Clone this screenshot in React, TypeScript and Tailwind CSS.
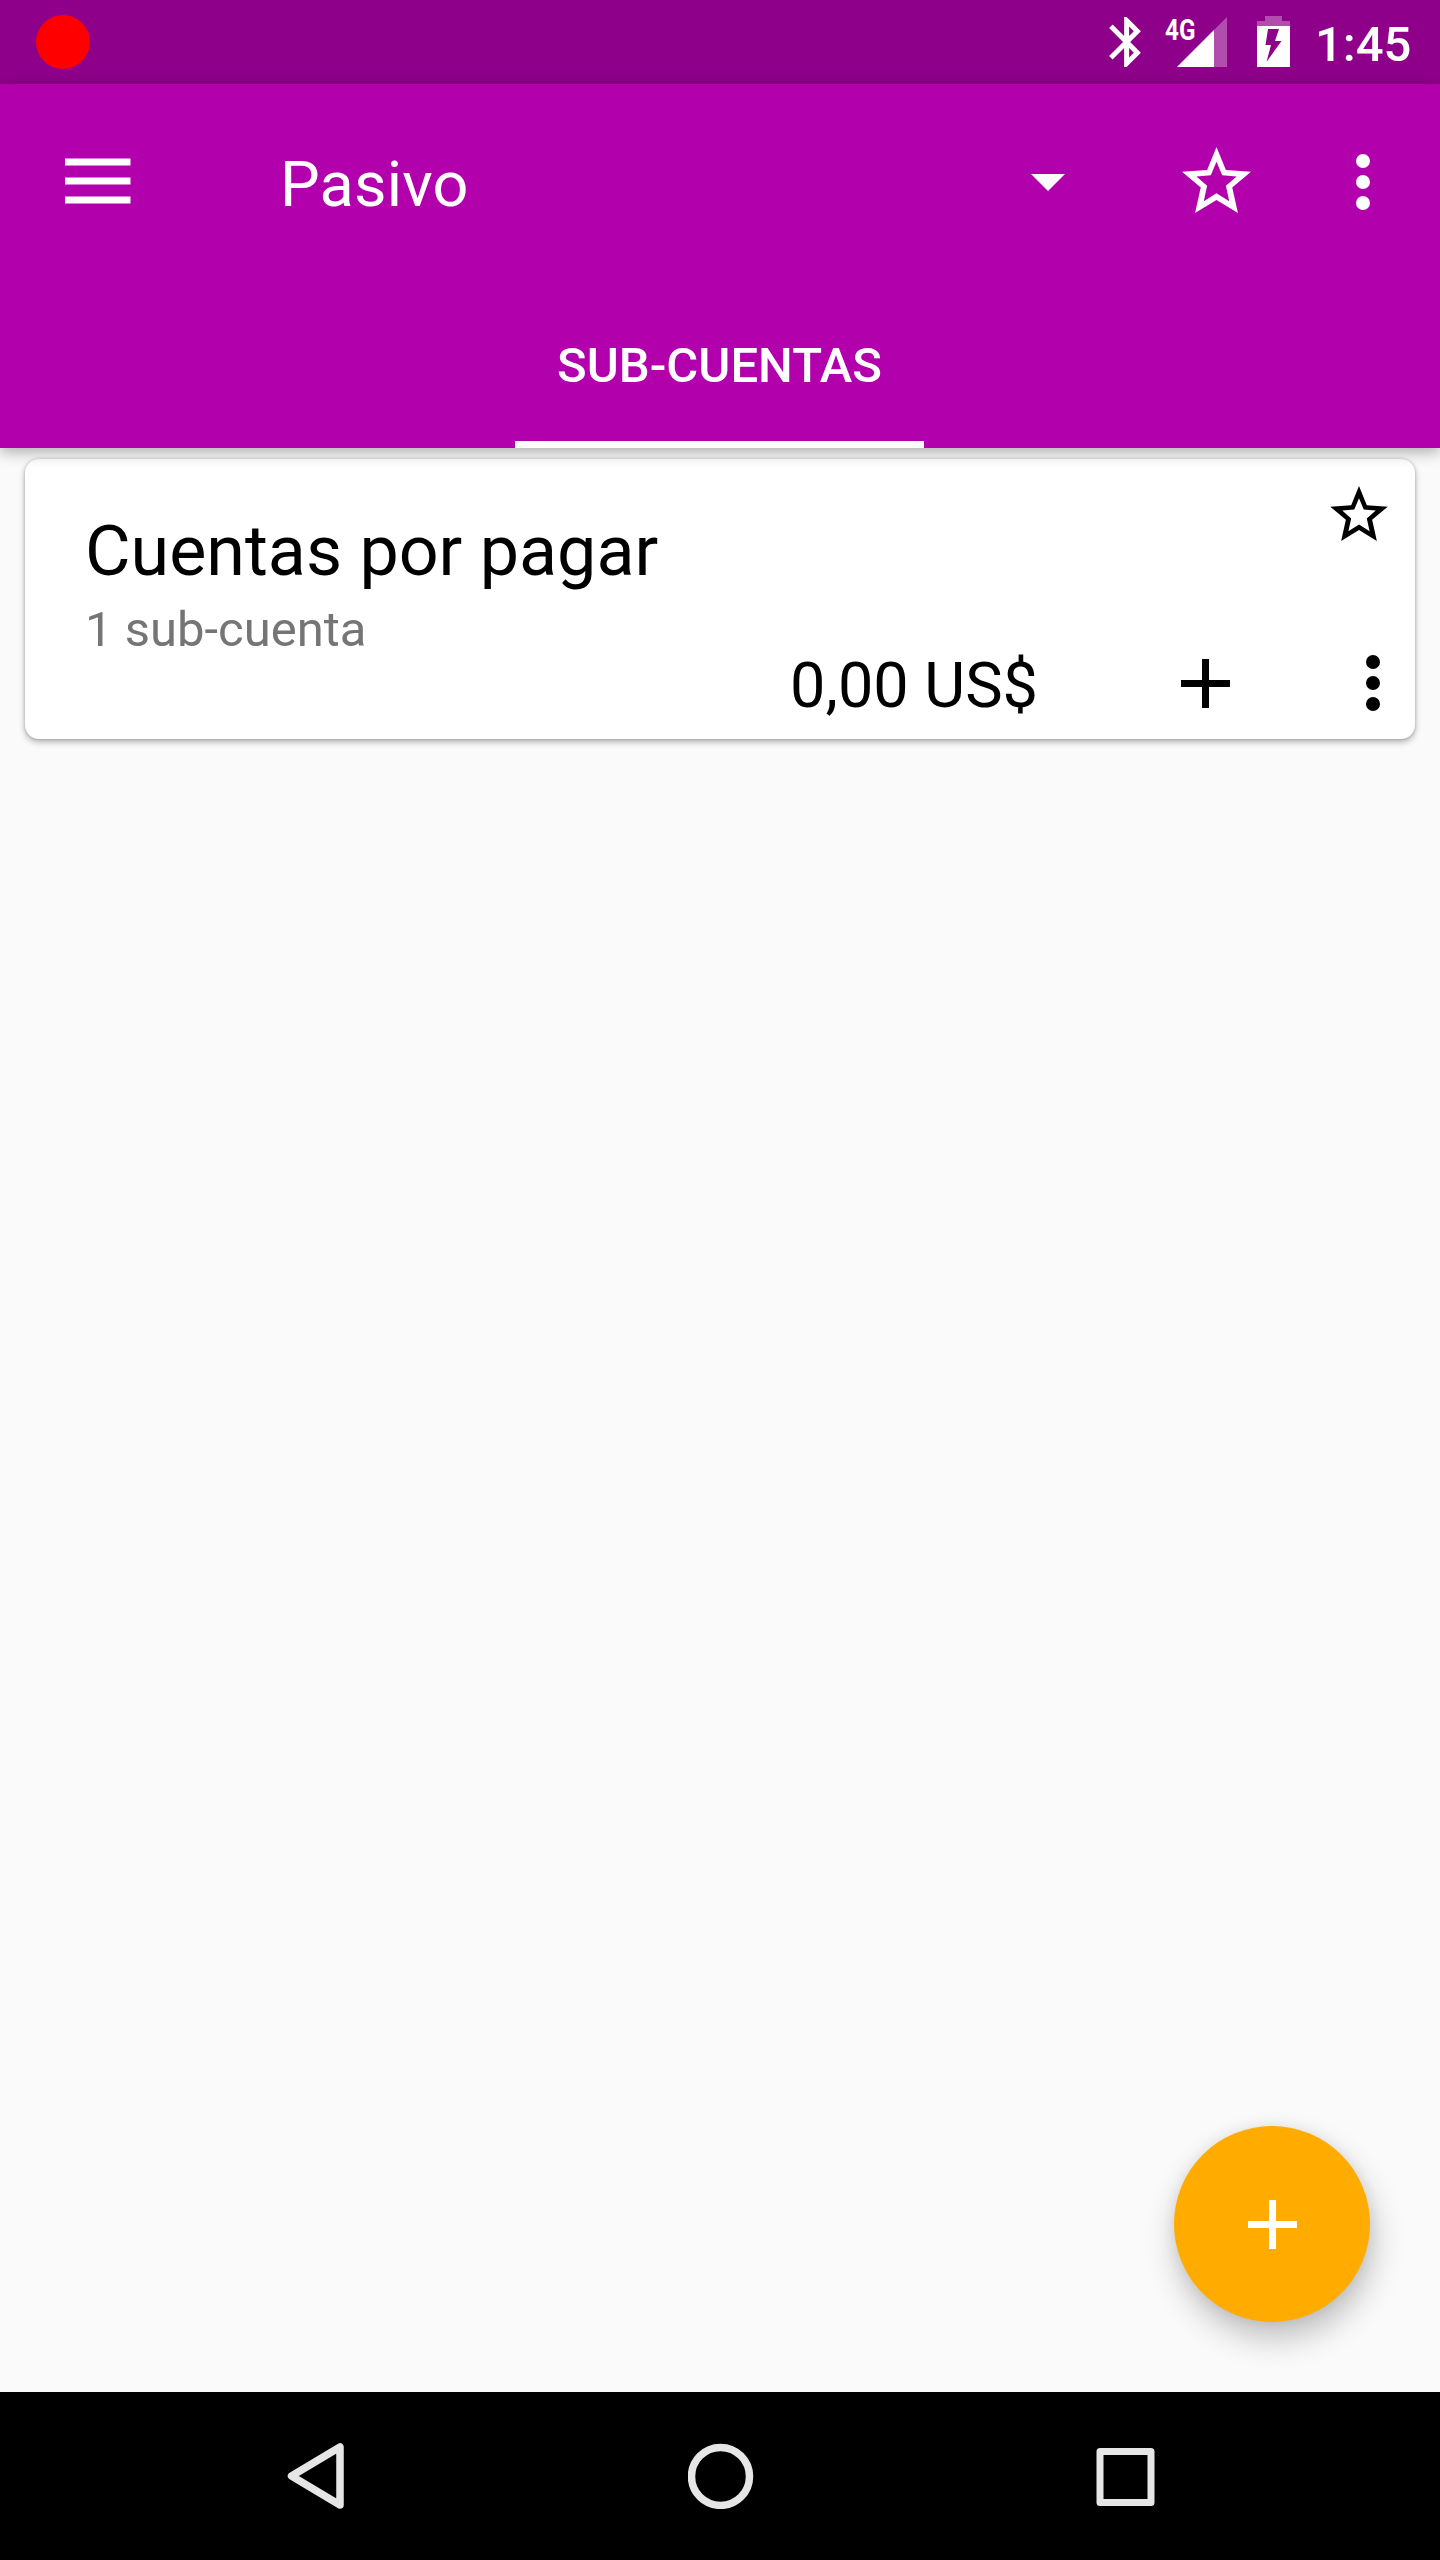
import React from "react";

function StarOutline({ className }: { className: string }) {
  return (
    <svg viewBox="0 0 206 197" className={className} fill="currentColor" fillRule="evenodd">
      <path d="M103 0L131 69L206 74L150 121L167 197L103 158L39 197L56 121L0 74L75 69Z M103 44L86 84L43 88L75 116L65 162L103 138L141 162L131 116L163 88L120 84Z" />
    </svg>
  );
}

function Dots({ className }: { className: string }) {
  return (
    <svg viewBox="0 0 14 56" className={className} fill="currentColor">
      <circle cx="7" cy="7" r="7" />
      <circle cx="7" cy="28" r="7" />
      <circle cx="7" cy="49" r="7" />
    </svg>
  );
}

function Plus({ className }: { className: string }) {
  return (
    <svg viewBox="0 0 49 49" className={className} fill="currentColor">
      <path d="M21 0h7v21h21v7H28v21h-7V28H0v-7h21z" />
    </svg>
  );
}

function StatusBar() {
  return (
    <div className="flex h-[84px] items-start bg-[#8f008a]">
      <div className="mt-[15px] ml-9 h-[54px] w-[54px] rounded-full bg-[#ff0000]" />
      <svg viewBox="5 2 12.71 20" className="mt-[17px] ml-[1019px] h-[50px] w-8" fill="white">
        <path d="M17.710 7.710L12 2h-1v7.590L6.410 5 5 6.410 10.590 12 5 17.590 6.410 19 11 14.410V22h1l5.710-5.710-4.300-4.290 4.300-4.290zM13 5.830l1.880 1.880L13 9.590V5.830zm1.880 10.460L13 18.170v-3.760l1.880 1.880z" />
      </svg>
      <div className="relative ml-[23px] h-[84px] w-[63px]">
        <span className="absolute top-[12px] left-px origin-left scale-x-[0.81] text-[30px] leading-[35px] font-bold">4G</span>
        <svg viewBox="0 0 50 50" className="absolute top-[17px] left-[13px] h-[50px] w-[50px]">
          <path d="M50 0V50H0z" fill="white" fillOpacity="0.3" />
          <path d="M37 13V50H0z" fill="white" />
        </svg>
      </div>
      <svg viewBox="0 0 33 51" className="mt-4 ml-[30px] h-[51px] w-[33px]">
        <path d="M8 0h17v5h8v5H0V5h8z" fill="white" fillOpacity="0.3" />
        <path fillRule="evenodd" fill="white" d="M0 10H33V51H0z M11 13L8.500 29H14L9.500 46L24.500 25H18L22 13z" />
      </svg>
      <span className="mt-[16px] ml-[25px] text-[49px] leading-[58px] font-medium">1:45</span>
    </div>
  );
}

function Header() {
  return (
    <header className="relative z-10 bg-[#b300ad] shadow-[0_4px_14px_rgba(0,0,0,0.32)]">
      <div className="flex h-[196px] items-center">
        <svg viewBox="0 0 66 46" className="mt-[-3px] ml-[65px] h-[46px] w-[66px]" fill="white">
          <path d="M0 .5h65.500v7H0zM0 19.500h65.500v7H0zM0 38.500h65.500v7H0z" />
        </svg>
        <h1 className="mt-[5px] ml-[149px] flex-1 text-[63px] leading-[74px] tracking-[0.2px]">Pasivo</h1>
        <svg viewBox="0 0 34 17" className="mr-[117px] h-[17px] w-[34px]" fill="white">
          <path d="M0 0h34L17 17z" />
        </svg>
        <StarOutline className="mt-[-4px] mr-[105px] h-[66px] w-[69px]" />
        <Dots className="mr-[70px] h-14 w-[14px]" />
      </div>
      <div className="flex h-[168px] justify-center pr-px">
        <div className="flex w-[409px] items-center justify-center border-b-[7px] border-white pt-[11px]">
          <span className="text-[49px] leading-[58px] font-medium">SUB-CUENTAS</span>
        </div>
      </div>
    </header>
  );
}

function AccountCard() {
  return (
    <section className="mx-[25px] mt-[11px] flex h-[280px] justify-between rounded-[14px] bg-white text-black shadow-[0_3px_6px_rgba(0,0,0,0.3),0_0_3px_rgba(0,0,0,0.18)]">
      <div className="pt-[51px] pl-[60px]">
        <h2 className="text-[70px] leading-[82px]">Cuentas por pagar</h2>
        <p className="mt-[9px] text-[49px] leading-[58px] text-[#757575]">1 sub-cuenta</p>
      </div>
      <div className="flex flex-col items-end justify-between pt-[27px]">
        <StarOutline className="mr-[27px] h-[55px] w-[58px]" />
        <div className="mb-[20px] flex h-[72px] items-center">
          <span className="mt-[5px] mr-[143px] text-[63px] leading-[74px]">0,00 US$</span>
          <Plus className="mr-[136px] h-[49px] w-[49px]" />
          <Dots className="mr-[35px] h-14 w-[14px]" />
        </div>
      </div>
    </section>
  );
}

function NavigationBar() {
  return (
    <nav className="flex h-[168px] items-center bg-black text-[#e6e6e6]">
      <svg viewBox="0 0 58 68" className="ml-[287px] h-[68px] w-[58px]" fill="none" stroke="currentColor" strokeWidth="7.500" strokeLinejoin="round">
        <path d="M53 5V63L4.500 34z" />
      </svg>
      <svg viewBox="0 0 66 66" className="ml-[343px] h-[66px] w-[66px]" fill="none" stroke="currentColor" strokeWidth="7.500">
        <circle cx="32.500" cy="33.400" r="29" />
      </svg>
      <svg viewBox="0 0 59 59" className="ml-[342px] h-[59px] w-[59px]" fill="none" stroke="currentColor" strokeWidth="7" strokeLinejoin="round">
        <path d="M4 4.500H55V55.500H4z" />
      </svg>
    </nav>
  );
}

export default function App() {
  return (
    <div className="flex h-[2560px] w-[1440px] flex-col overflow-hidden bg-[#fafafa] font-['Roboto',sans-serif] text-white">
      <StatusBar />
      <Header />
      <main className="relative flex-1">
        <AccountCard />
        <button className="absolute right-[70px] bottom-[70px] flex h-[196px] w-[196px] items-center justify-center rounded-full bg-[#ffab00] shadow-[3px_16px_32px_rgba(0,0,0,0.24),0_0_14px_rgba(0,0,0,0.07)]">
          <Plus className="h-[49px] w-[49px]" />
        </button>
      </main>
      <NavigationBar />
    </div>
  );
}
